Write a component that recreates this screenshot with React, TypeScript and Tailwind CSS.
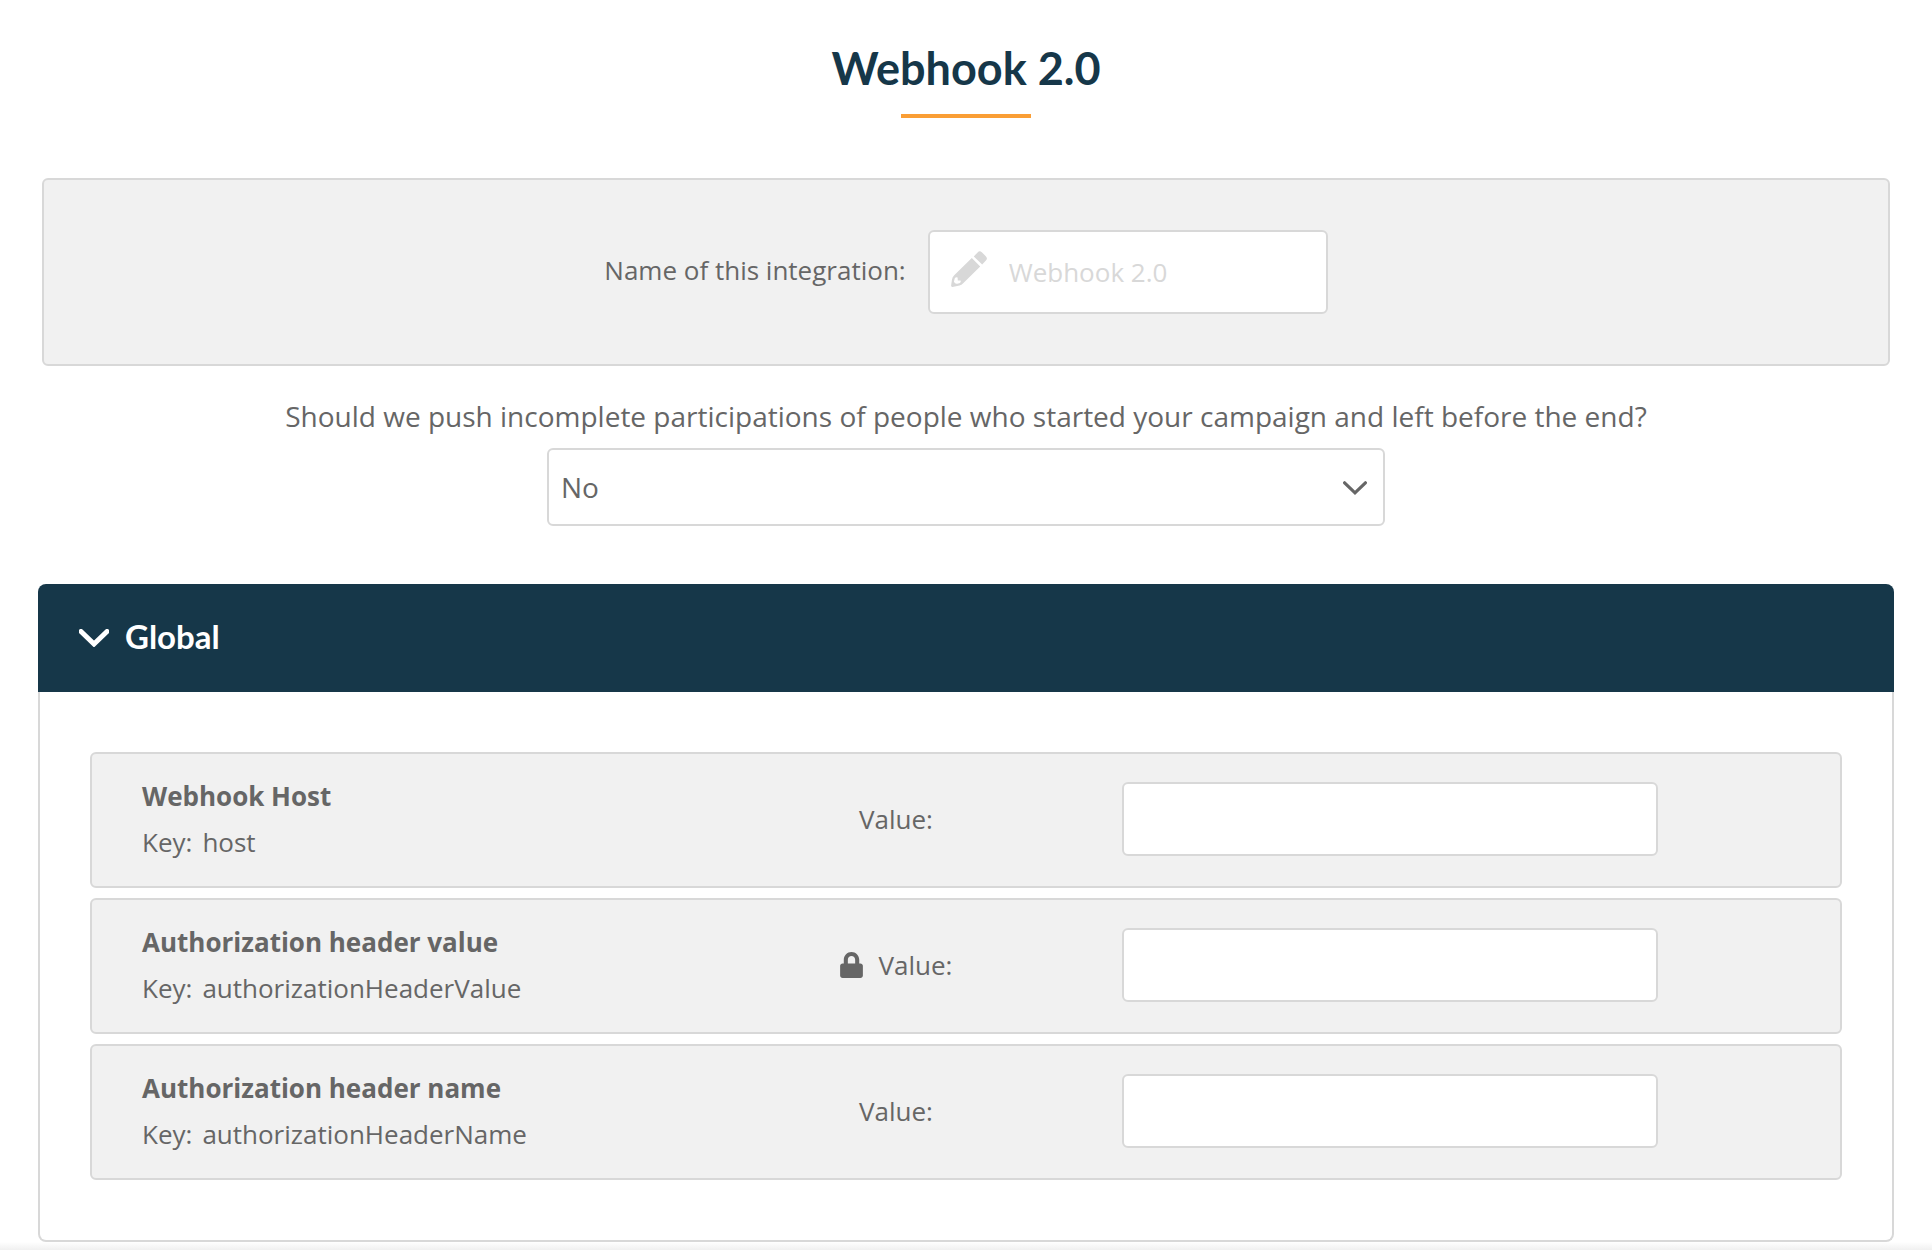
import { useState } from 'react';
import { FaLock } from 'react-icons/fa';

interface IntegrationField {
  key: string;
  label: string;
  secured?: boolean;
}

const GLOBAL_FIELDS: IntegrationField[] = [
  { key: 'host', label: 'Webhook Host' },
  { key: 'authorizationHeaderValue', label: 'Authorization header value', secured: true },
  { key: 'authorizationHeaderName', label: 'Authorization header name' },
];

/* ------------------------------------------------------------------ */
/*  Icons                                                              */
/* ------------------------------------------------------------------ */

function Chevron({ className, strokeWidth }: { className: string; strokeWidth: number }) {
  return (
    <svg viewBox="0 0 30 18" fill="none" stroke="currentColor" strokeWidth={strokeWidth} strokeLinecap="round" className={className} aria-hidden="true">
      <path d="M2 2.5 15 15 28 2.5" />
    </svg>
  );
}

function Pencil({ className }: { className: string }) {
  return (
    <svg viewBox="0 0 36 36" fill="currentColor" className={className} aria-hidden="true">
      <path d="M22.8 5.4 26.6 1.4Q28.6-.7 30.800 1.200L34.8 5.200Q37 7.400 34.900 9.600L31.200 13.600Z" />
      <path fillRule="evenodd" d="M20.800 7 29.200 15.400 12.200 32.200Q10.500 34 8.500 34.500L1.500 35.900Q0 36 .1 34.500L1 28.500Q1.300 26 3.200 24.200ZM3.800 27.200 2.900 30.800Q4 33 6.200 32.700L9 31.900Q10.200 30.600 9.600 29.400L6.800 29.400 6.600 26.600Q5 25.800 3.800 27.200Z" />
    </svg>
  );
}

/* ------------------------------------------------------------------ */
/*  Subcomponents                                                      */
/* ------------------------------------------------------------------ */

function FieldRow({ field }: { field: IntegrationField }) {
  const [value, setValue] = useState('');

  return (
    <div className="grid grid-cols-[165fr_47fr_200fr] items-center rounded-md border-2 border-[#d8d8d8] bg-[#f1f1f1] px-[50px] pt-[19px] pb-[21px]">
      <div>
        <div className="text-[26px] leading-[46px] font-bold">{field.label}</div>
        <div className="flex gap-2.5 text-[26px] leading-[46px]">
          <span>Key:</span>
          <span>{field.key}</span>
        </div>
      </div>
      <label htmlFor={field.key} className="flex items-center justify-center gap-4 text-[26px] leading-[46px]">
        {field.secured && <FaLock className="h-[26px] w-[23px]" />}
        Value:
      </label>
      <input
        id={field.key}
        type="text"
        value={value}
        onChange={(e) => setValue(e.target.value)}
        className="h-[74px] w-[67%] justify-self-center rounded-md border-2 border-[#d8d8d8] bg-white px-3 text-[26px]"
      />
    </div>
  );
}

/* ------------------------------------------------------------------ */
/*  Component                                                          */
/* ------------------------------------------------------------------ */

export default function App() {
  const [name, setName] = useState('');
  const [pushIncomplete, setPushIncomplete] = useState('no');
  const [open, setOpen] = useState(true);

  return (
    <div className="min-h-screen bg-white font-['Open_Sans',sans-serif] text-[#666]">
      <main className="px-[38px]">
        <header className="flex flex-col items-center pt-10">
          <h1 className="font-['Lato',sans-serif] text-[45px] leading-[56px] font-bold text-[#163749]">Webhook 2.0</h1>
          <div className="mt-[18px] h-1 w-[130px] bg-[#fa9e35]" />
        </header>

        <section className="mx-1 mt-[60px] flex items-center justify-center gap-[22px] rounded-md border-2 border-[#d8d8d8] bg-[#f1f1f1] py-[50px]">
          <label htmlFor="name" className="pb-1 text-[26px]">Name of this integration:</label>
          <div className="flex h-[84px] w-[400px] items-center gap-[22px] rounded-md border-2 border-[#d8d8d8] bg-white pl-[21px]">
            <Pencil className="mb-1.5 size-9 shrink-0 text-[#d8d8d8]" />
            <input
              id="name"
              type="text"
              placeholder="Webhook 2.0"
              value={name}
              onChange={(e) => setName(e.target.value)}
              className="w-full min-w-0 text-[26px] outline-none placeholder:text-[#d8d8d8]"
            />
          </div>
        </section>

        <section className="mt-7 flex flex-col items-center gap-2.5">
          <label htmlFor="push" className="text-[28px] leading-[44px]">
            Should we push incomplete participations of people who started your campaign and left before the end?
          </label>
          <div className="relative w-[838px] max-w-full">
            <select
              id="push"
              value={pushIncomplete}
              onChange={(e) => setPushIncomplete(e.target.value)}
              className="h-[78px] w-full appearance-none rounded-md border-2 border-[#d8d8d8] bg-white px-3 text-[28px]"
            >
              <option value="no">No</option>
              <option value="yes">Yes</option>
            </select>
            <Chevron strokeWidth={4} className="pointer-events-none absolute top-8 right-[18px] h-4 w-6" />
          </div>
        </section>

        <section className="mt-[58px]">
          <button
            type="button"
            aria-expanded={open}
            onClick={() => setOpen(!open)}
            className="flex h-[108px] w-full items-center gap-4 rounded-t-lg bg-[#163749] pl-[41px] text-white"
          >
            <Chevron strokeWidth={5} className="h-[18px] w-[30px]" />
            <span className="pb-0.5 font-['Lato',sans-serif] text-[33px] font-bold">Global</span>
          </button>
          {open && (
            <div className="flex flex-col gap-[10px] rounded-b-lg border-2 border-t-0 border-[#d8d8d8] px-[50px] py-[60px]">
              {GLOBAL_FIELDS.map((field) => (
                <FieldRow key={field.key} field={field} />
              ))}
            </div>
          )}
        </section>
      </main>
      <div className="h-2 bg-linear-to-b from-white to-[#f0f0f0]" />
    </div>
  );
}
